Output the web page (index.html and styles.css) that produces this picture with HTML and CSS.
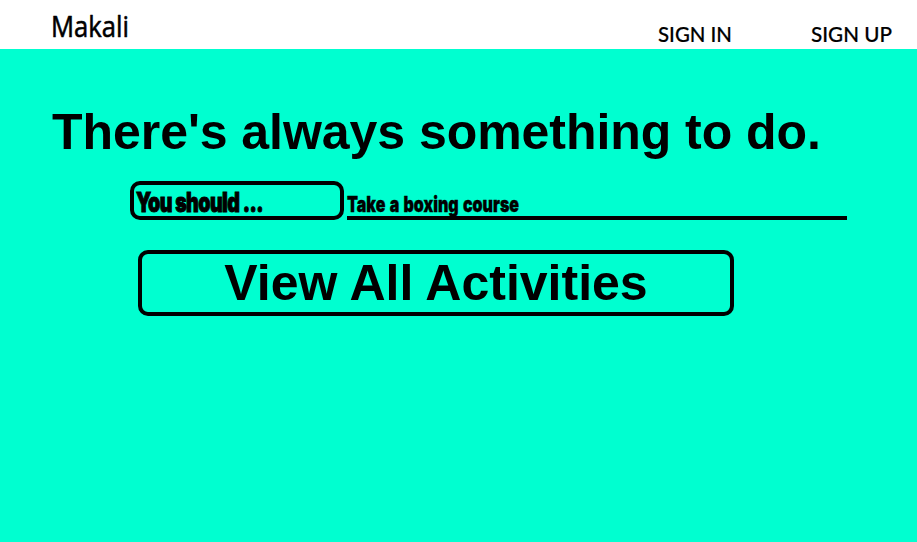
FILE: index.html
```
<!DOCTYPE html>
<html lang="en">
<head>
<meta charset="utf-8">
<title>Makali</title>
<link rel="stylesheet" href="styles.css">
</head>
<body>
<header class="header">
  <svg class="logo" width="80" height="49"><text x="0" y="37" textLength="78" lengthAdjust="spacingAndGlyphs">Makali</text></svg>
  <nav class="nav">
    <svg class="link" width="73" height="49"><text x="0" y="42" textLength="74" lengthAdjust="spacingAndGlyphs">SIGN IN</text></svg>
    <svg class="link" width="81" height="49"><text x="0" y="42" textLength="81" lengthAdjust="spacingAndGlyphs">SIGN UP</text></svg>
  </nav>
</header>
<main class="main">
  <h1 class="title">There's always something to do.</h1>
  <div class="suggestion">
    <div class="prompt"><svg class="heavy prompt-text" width="126" height="31"><text x="-1" y="27" textLength="127" lengthAdjust="spacingAndGlyphs">You should ...</text></svg></div>
    <div class="activity"><svg class="heavy activity-text" width="172" height="35"><text x="0" y="31" textLength="172" lengthAdjust="spacingAndGlyphs">Take a boxing course</text></svg></div>
  </div>
  <button class="view-all">View All Activities</button>
</main>
</body>
</html>
```
FILE: styles.css
```
* {
  box-sizing: border-box;
}

body {
  margin: 0;
  min-height: 542px;
  background: #00ffd0;
  color: #000;
  font-family: Arial, "Liberation Sans", sans-serif;
}

svg {
  display: block;
  overflow: visible;
}

.header {
  display: flex;
  justify-content: space-between;
  height: 49px;
  padding: 0 25px 0 51px;
  background: #fff;
}

.nav {
  display: flex;
  gap: 80px;
}

.logo {
  font: 500 30px "Open Sans", sans-serif;
  stroke: #000;
  stroke-width: 0.6px;
  stroke-linejoin: round;
}

.link {
  font: 500 22px Lato, sans-serif;
  stroke: #000;
  stroke-width: 0.2px;
}

.main {
  padding: 54px 0 0 52px;
}

.title {
  margin: 0;
  font-size: 50px;
  line-height: 58px;
  letter-spacing: -0.05px;
  white-space: nowrap;
}

.suggestion {
  display: flex;
  gap: 3px;
  margin: 20px 0 0 78px;
}

.prompt {
  width: 214px;
  height: 39px;
  padding-left: 3px;
  border: 4px solid #000;
  border-radius: 10px;
}

.activity {
  width: 500px;
  height: 39px;
  border-bottom: 4px solid #000;
}

.heavy {
  font-family: Impact, Inter, sans-serif;
  font-weight: 900;
  stroke: #000;
}

.prompt-text {
  font-size: 27px;
  font-feature-settings: "calt" 0;
  letter-spacing: -0.8px;
  stroke-width: 1px;
}

.activity-text {
  font-size: 22px;
  word-spacing: 1.5px;
  stroke-width: 0.4px;
}

.view-all {
  display: block;
  width: 596px;
  height: 66px;
  margin: 30px 0 0 86px;
  padding: 0;
  border: 4px solid #000;
  border-radius: 10px;
  background: transparent;
  color: #000;
  font: bold 50px/58px Arial, "Liberation Sans", sans-serif;
}
```
